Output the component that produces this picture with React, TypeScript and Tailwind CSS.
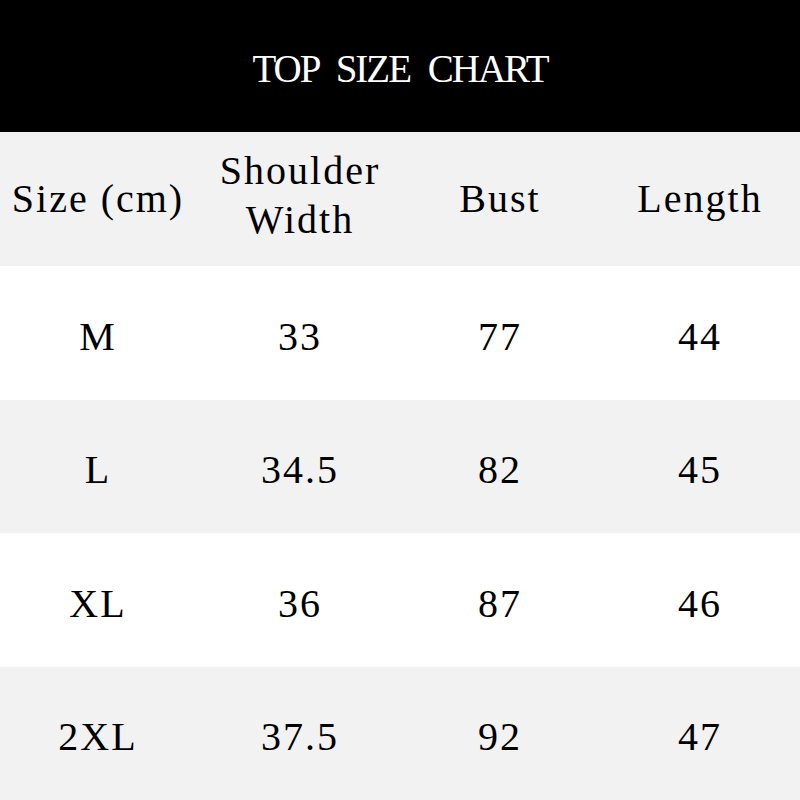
const rows = [
  ["M", "33", "77", "44"],
  ["L", "34.5", "82", "45"],
  ["XL", "36", "87", "46"],
  ["2XL", "37.5", "92", "47"],
];

export default function App() {
  return (
    <div className="w-[800px] h-[800px] flex flex-col font-['Liberation_Serif',serif] text-black">
      {/* Title bar */}
      <div className="h-[132px] bg-black flex items-center justify-center">
        <h1 className="text-white text-[39px] tracking-[-2px] [word-spacing:10px] leading-none pt-1">TOP SIZE CHART</h1>
      </div>

      {/* Column heads */}
      <div className="h-[134px] bg-[#f2f2f2] grid grid-cols-4 items-center text-[40px] tracking-[2px]">
        <div className="text-center pr-1 whitespace-nowrap">Size (cm)</div>
        <div className="text-center leading-[49px] pb-2">
          Shoulder
          <br />
          Width
        </div>
        <div className="text-center">Bust</div>
        <div className="text-center">Length</div>
      </div>

      {/* Size rows */}
      {rows.map((r, i) => (
        <div
          key={r[0]}
          className={`flex-1 grid grid-cols-4 items-center text-[40px] tracking-[2px] ${i % 2 === 0 ? "bg-white" : "bg-[#f2f2f2]"}`}
        >
          {r.map((cell, j) => (
            <div key={j} className={`text-center pt-2 ${j === 0 ? "pr-1" : ""}`}>
              {cell}
            </div>
          ))}
        </div>
      ))}
    </div>
  );
}
